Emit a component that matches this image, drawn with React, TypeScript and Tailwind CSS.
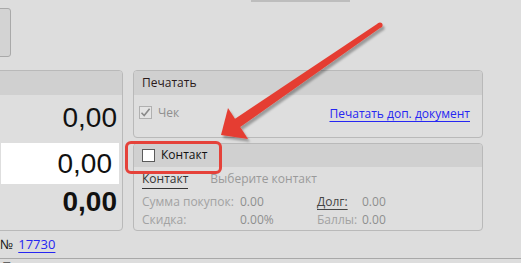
export default function App() {
  return (
    <div className="relative w-[521px] h-[263px] overflow-hidden bg-[#dddddd] font-['Open_Sans',sans-serif] text-[12px] leading-none text-[#1e1e1e]">
      {/* top row */}
      <div className="flex h-[70px]">
        <div className="-ml-[10px] mt-[8px] w-[21px] h-[49px] rounded-[3px] border border-[#a9a9a9] bg-[#d3d3d3]" />
        <div className="ml-[240px] w-[99px] h-[2px] bg-[#bdbdbd]" />
      </div>

      {/* middle */}
      <div className="flex h-[161px]">
        {/* left panel */}
        <div className="-ml-[8px] w-[131px] h-[161px] rounded-[4px] border border-[#b9b9b9] bg-[#dedede] flex flex-col">
          <div className="h-[24px] bg-[#d0d0d0] rounded-t-[3px]" />
          <div className="h-[40px] flex items-center justify-end pr-[5px] pt-[6px] text-[28px]">
            <span className="font-['Liberation_Sans',sans-serif] text-[#111]">0,00</span>
          </div>
          <div className="mt-[8px] ml-[8px] mr-[3px] h-[41px] bg-white flex items-center justify-end pr-[7px] text-[28px]">
            <span className="font-['Liberation_Sans',sans-serif] text-[#111]">0,00</span>
          </div>
          <div className="h-[32px] flex items-center justify-end pr-[5px] pt-[4px] text-[28px] font-bold">
            <span className="font-['Liberation_Sans',sans-serif] text-[#111]">0,00</span>
          </div>
        </div>

        {/* right column */}
        <div className="ml-[10px] w-[350px] flex flex-col">
          <div className="h-[68px] rounded-[4px] border border-[#b9b9b9] bg-[#dedede] flex flex-col">
            <div className="h-[24px] bg-[#d0d0d0] rounded-t-[3px] flex items-center pl-[8px] text-[#2a1a1a]">
              Печатать
            </div>
            <div className="flex justify-between pl-[5px] pr-[12px] pt-[10px]">
              <div className="flex items-center gap-[6px] text-[#8f8f8f]">
                <div className="w-[13px] h-[13px] border border-[#b0b0b0] bg-[#e4e4e4] flex items-center justify-center">
                  <svg width="11" height="11" viewBox="0 0 11 11">
                    <path d="M1.5 5.8 L4.2 8.6 L9.6 1.8" fill="none" stroke="#8a8a8a" strokeWidth="1.6" />
                  </svg>
                </div>
                <span>Чек</span>
              </div>
              <span className="mt-[3px] text-[#2626f2] underline underline-offset-[3px] decoration-[#2626f2]">
                Печатать доп. документ
              </span>
            </div>
          </div>

          <div className="mt-[5px] h-[89px] rounded-[4px] border border-[#b9b9b9] bg-[#dedede] flex flex-col">
            <div className="h-[23px] bg-[#d0d0d0] rounded-t-[3px] flex items-center pl-[8px] gap-[6px]">
              <div className="w-[13px] h-[13px] border border-[#5a5a5a] bg-white" />
              <span className="text-[#111]">Контакт</span>
            </div>
            <div className="flex items-center pl-[8px] h-[26px] pt-[2px]">
              <span className="text-[#333] border-b border-[#333] pb-[3px]">Контакт</span>
              <span className="ml-[22px] text-[#9a9a9a] pb-[3px]">Выберите контакт</span>
            </div>
            <div className="flex pl-[8px] h-[18px] items-center text-[#a2a2a2]">
              <span className="w-[98px]">Сумма покупок:</span>
              <span className="w-[77px] text-[#8e8e8e]">0.00</span>
              <span className="w-[45px] text-[#444] underline underline-offset-[3px]">Долг:</span>
              <span className="text-[#8e8e8e]">0.00</span>
            </div>
            <div className="flex pl-[8px] h-[18px] items-center text-[#a2a2a2]">
              <span className="w-[98px]">Скидка:</span>
              <span className="w-[77px] text-[#8e8e8e]">0.00%</span>
              <span className="w-[45px]">Баллы:</span>
              <span className="text-[#8e8e8e]">0.00</span>
            </div>
          </div>
        </div>
      </div>

      {/* bottom */}
      <div className="h-[27px] flex items-center gap-[5px] text-[13px]">
        <span className="text-[#111]">№</span>
        <span className="text-[#2626f2] underline underline-offset-[3px]">17730</span>
      </div>
      <div className="border-t border-[#a8a8a8] h-[10px] pl-[2px] text-[13px] text-[#666] leading-[14px]">
        <span>Позиции продажи</span>
      </div>

      {/* red highlight */}
      <div className="absolute left-[125px] top-[141px] w-[97px] h-[33px] rounded-[6px] border-[3px] border-[#e5423a]" />

      {/* arrow */}
      <svg className="absolute left-0 top-0" width="521" height="263" viewBox="0 0 521 263">
        <defs>
          <filter id="sh" x="-20%" y="-20%" width="140%" height="140%">
            <feDropShadow dx="2" dy="3" stdDeviation="1.2" floodColor="#000" floodOpacity="0.3" />
          </filter>
        </defs>
        <g filter="url(#sh)" fill="#e53e33">
          <circle cx="380" cy="25" r="2.6" />
          <polygon points="381.5,27.1 378.5,22.9 233.2,119.9 238.8,128.1" />
          <polygon points="221,135 228,108 248,139" />
        </g>
      </svg>
    </div>
  );
}
